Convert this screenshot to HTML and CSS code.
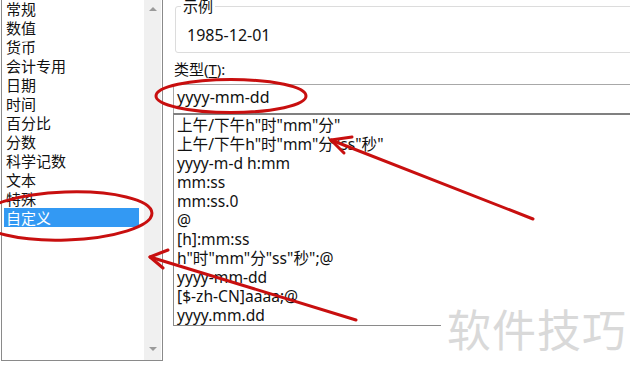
FILE: index.html
```html
<!DOCTYPE html>
<html lang="zh-CN">
<head>
<meta charset="utf-8">
<title>设置单元格格式 - 自定义</title>
<link rel="stylesheet" href="styles.css">
</head>
<body>
<div class="dialog">
  <div class="cat-list">
    <ul class="cat-items">
      <li>常规</li>
      <li>数值</li>
      <li>货币</li>
      <li>会计专用</li>
      <li>日期</li>
      <li>时间</li>
      <li>百分比</li>
      <li>分数</li>
      <li>科学记数</li>
      <li>文本</li>
      <li>特殊</li>
      <li class="selected">自定义</li>
    </ul>
    <div class="vscroll">
      <span class="arrow up"></span>
      <span class="arrow down"></span>
    </div>
  </div>

  <div class="panel">
    <div class="sample">
      <span class="sample-legend">示例</span>
      <div class="sample-value">1985-12-01</div>
    </div>
    <div class="type-label">类型(<u>T</u>):</div>
    <div class="type-input">yyyy-mm-dd</div>
    <ul class="fmt-list">
      <li>上午/下午h"时"mm"分"</li>
      <li>上午/下午h"时"mm"分"ss"秒"</li>
      <li>yyyy-m-d h:mm</li>
      <li>mm:ss</li>
      <li>mm:ss.0</li>
      <li>@</li>
      <li>[h]:mm:ss</li>
      <li>h"时"mm"分"ss"秒";@</li>
      <li>yyyy-mm-dd</li>
      <li>[$-zh-CN]aaaa;@</li>
      <li>yyyy.mm.dd</li>
    </ul>
  </div>
</div>

<div class="watermark">软件技巧</div>

<svg class="marks" width="630" height="378" viewBox="0 0 630 378">
  <g fill="none" stroke="#c80f0f" stroke-width="3" stroke-linecap="round" stroke-linejoin="round">
    <ellipse cx="231" cy="96" rx="75" ry="16.5"/>
    <ellipse cx="66" cy="216" rx="86" ry="24" transform="rotate(-2 66 216)"/>
    <path d="M533 219 L331 140"/>
    <path d="M352 137 L331 140 L344 153"/>
    <path d="M356 320 L150 257"/>
    <path d="M168 250 L150 257 L163 268"/>
  </g>
</svg>
</body>
</html>
```

FILE: styles.css
```css
* { box-sizing: border-box; }

html, body {
  margin: 0;
  padding: 0;
}

body {
  width: 630px;
  height: 378px;
  overflow: hidden;
  position: relative;
  background: #ffffff;
  font-family: "Noto Sans", "Noto Sans CJK SC", sans-serif;
  font-size: 15px;
  color: #111111;
}

ul {
  list-style: none;
  margin: 0;
  padding: 0;
}

.dialog {
  display: flex;
  align-items: flex-start;
  height: 378px;
}

/* left category list */
.cat-list {
  display: flex;
  width: 162px;
  height: 362px;
  margin-left: 1px;
  margin-top: -1px;
  border: 1px solid #8a8a8a;
  border-top: none;
  background: #fff;
}

.cat-items {
  flex: 1;
  padding: 0 5px 0 2px;
}

.cat-items li {
  height: 19px;
  line-height: 19px;
  padding-left: 2px;
  white-space: nowrap;
  font-family: "Noto Sans CJK SC", sans-serif;
}

.cat-items li.selected {
  background: #3399f3;
  color: #ffffff;
}

.vscroll {
  width: 17px;
  margin-right: 1px;
  background: #f0f0f0;
  display: flex;
  flex-direction: column;
  justify-content: space-between;
  align-items: center;
  padding: 8px 0 9px;
}

.arrow {
  width: 0;
  height: 0;
  border-left: 4px solid transparent;
  border-right: 4px solid transparent;
}

.arrow.up { border-bottom: 4px solid #9a9a9a; }
.arrow.down { border-top: 4px solid #9a9a9a; }

/* right panel */
.panel {
  flex: 1;
  padding-left: 10px;
  min-width: 0;
}

.sample {
  position: relative;
  margin: 6px -10px 0 2px;
  height: 47px;
  border: 1px solid #dcdcdc;
  border-radius: 3px;
}

.sample-legend {
  position: absolute;
  top: -11px;
  left: 5px;
  padding: 0 2px;
  background: #fff;
  line-height: 20px;
  font-family: "Noto Sans CJK SC", sans-serif;
}

.sample-value {
  padding: 18px 0 0 11px;
  line-height: 20px;
  font-size: 16px;
}

.type-label {
  margin-top: 6px;
  padding-left: 1px;
  line-height: 20px;
}

.type-label u {
  text-decoration-thickness: 1px;
  text-underline-offset: 2px;
}

.type-input {
  margin-top: 5px;
  margin-right: -10px;
  height: 29px;
  border-top: 1px solid #a8a8a8;
  border-left: 1px solid #a8a8a8;
  padding: 2px 0 0 3px;
  line-height: 20px;
  font-size: 16px;
}

.fmt-list {
  margin-right: -10px;
  border-top: 2px solid #808080;
  border-left: 1px solid #8a8a8a;
  border-bottom: 1px solid #8a8a8a;
  padding: 1px 0 0 3px;
  font-size: 15.6px;
}

.fmt-list li {
  height: 19px;
  line-height: 19px;
  white-space: nowrap;
}

/* overlays */
.watermark {
  position: absolute;
  left: 441px;
  top: 298px;
  right: 0;
  bottom: 0;
  background: #ffffff;
  color: #d9d9d9;
  font-family: "Noto Sans CJK SC", sans-serif;
  font-size: 44px;
  line-height: 60px;
  padding-left: 6px;
  letter-spacing: 1px;
  white-space: nowrap;
}

.marks {
  position: absolute;
  left: 0;
  top: 0;
  pointer-events: none;
}
```
